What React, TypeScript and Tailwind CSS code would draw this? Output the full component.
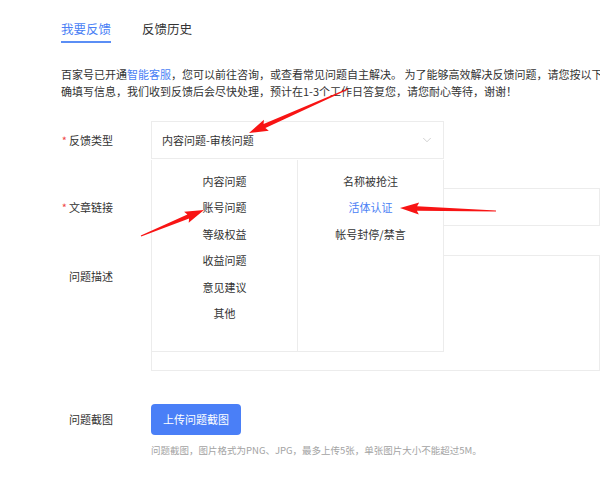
import { ChevronDown } from "lucide-react";

const leftItems = ["内容问题", "账号问题", "等级权益", "收益问题", "意见建议", "其他"];
const rightItems = [
  { label: "名称被抢注", active: false },
  { label: "活体认证", active: true },
  { label: "帐号封停/禁言", active: false },
];

// tapered annotation arrow, from tail to tip
function arrowPoints(tx: number, ty: number, px: number, py: number) {
  const len = Math.hypot(px - tx, py - ty);
  const dx = (px - tx) / len;
  const dy = (py - ty) / len;
  const nx = -dy;
  const ny = dx;
  const headLen = 17;
  const bx = px - dx * headLen;
  const by = py - dy * headLen;
  const pts = [
    [tx + nx * 0.4, ty + ny * 0.4],
    [bx + nx * 2.2, by + ny * 2.2],
    [bx - dx * 2 + nx * 6, by - dy * 2 + ny * 6],
    [px, py],
    [bx - dx * 2 - nx * 6, by - dy * 2 - ny * 6],
    [bx - nx * 2.2, by - ny * 2.2],
    [tx - nx * 0.4, ty - ny * 0.4],
  ];
  return pts.map((p) => `${p[0].toFixed(1)},${p[1].toFixed(1)}`).join(" ");
}

function Label({ text, required }: { text: string; required?: boolean }) {
  return (
    <div className="w-[52px] shrink-0 flex justify-end items-center text-[11px] text-[#333]">
      {required && <span className="text-[#f04848] mr-[2px]">*</span>}
      <span>{text}</span>
    </div>
  );
}

export default function App() {
  return (
    <div
      className="relative w-[600px] h-[484px] overflow-hidden bg-white"
      style={{ fontFamily: '"Noto Sans CJK SC", "Noto Sans", sans-serif' }}
    >
      {/* Tabs */}
      <div className="flex gap-[31px] pl-[61px] pt-[19px]">
        <div className="flex flex-col items-center">
          <span className="text-[12.5px] leading-[20px] text-[#4a7ff5]">我要反馈</span>
          <div className="mt-[2px] h-[2px] w-[50px] bg-[#5b8ef5]" />
        </div>
        <div className="flex flex-col items-center">
          <span className="text-[12.5px] leading-[20px] text-[#333]">反馈历史</span>
        </div>
      </div>

      {/* Notice */}
      <div className="pl-[61px] mt-[23px] text-[11px] leading-[17px] text-[#333] whitespace-nowrap">
        <div>
          百家号已开通<span className="text-[#4a7ff5]">智能客服</span>
          ，您可以前往咨询，或查看常见问题自主解决。 为了能够高效解决反馈问题，请您按以下要求准
        </div>
        <div>确填写信息，我们收到反馈后会尽快处理，预计在1-3个工作日答复您，请您耐心等待，谢谢！</div>
      </div>

      {/* Form */}
      <div className="pl-[61px] mt-[21px] flex flex-col">
        <div className="flex items-center h-[38px]">
          <Label text="反馈类型" required />
          <div className="relative ml-[38px] w-[293px] h-[38px] border border-[#ececec] flex items-center justify-between pl-[10px] pr-[9px] text-[11px] text-[#333]">
            <span>内容问题-审核问题</span>
            <ChevronDown size={14} strokeWidth={1} className="text-[#b0b0b0]" />
          </div>
        </div>

        <div className="flex items-center h-[38px] mt-[29px]">
          <Label text="文章链接" required />
          <div className="ml-[38px] w-[520px] h-[38px] border border-[#ececec]" />
        </div>

        <div className="flex items-start mt-[29px]">
          <div className="h-[42px] flex items-center">
            <Label text="问题描述" />
          </div>
          <div className="ml-[38px] w-[520px] h-[116px] border border-[#ececec]" />
        </div>

        <div className="flex items-center mt-[33px]">
          <Label text="问题截图" />
          <button className="ml-[38px] w-[90px] h-[31px] rounded-[4px] bg-[#4a7ff7] text-white text-[11px]">
            上传问题截图
          </button>
        </div>
        <div className="ml-[90px] mt-[9px] text-[9.5px] leading-[12px] text-[#a3a3a3] whitespace-nowrap">
          问题截图，图片格式为PNG、JPG，最多上传5张，单张图片大小不能超过5M。
        </div>
      </div>

      {/* Dropdown */}
      <div className="absolute left-[151px] top-[160px] w-[293px] h-[192px] bg-white border border-t-0 border-[#ececec] flex text-[11px] text-[#333]">
        <div className="w-[146px] border-r border-[#ececec] pt-[8px] flex flex-col">
          {leftItems.map((item) => (
            <div key={item} className="h-[26.4px] flex items-center justify-center">
              {item}
            </div>
          ))}
        </div>
        <div className="flex-1 pt-[8px] flex flex-col">
          {rightItems.map((item) => (
            <div
              key={item.label}
              className={`h-[26.4px] flex items-center justify-center ${item.active ? "text-[#4a7ff5]" : ""}`}
            >
              {item.label}
            </div>
          ))}
        </div>
      </div>

      {/* Annotation arrows */}
      <svg className="absolute left-0 top-0 pointer-events-none" width="600" height="484">
        <polygon points={arrowPoints(348, 89, 249, 133)} fill="#f81414" />
        <polygon points={arrowPoints(141, 236, 204, 210)} fill="#f81414" />
        <polygon points={arrowPoints(496, 211, 400, 208)} fill="#f81414" />
      </svg>
    </div>
  );
}
